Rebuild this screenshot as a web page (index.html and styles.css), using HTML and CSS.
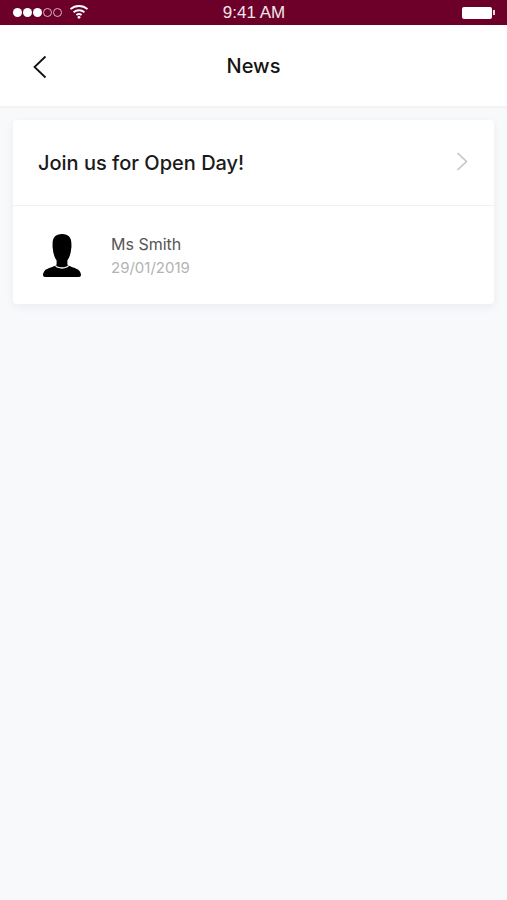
FILE: index.html
```html
<!DOCTYPE html>
<html lang="en">
<head>
  <meta charset="UTF-8" />
  <title>News</title>
  <link rel="stylesheet" href="styles.css">
</head>
<body>
  <div class="status-bar">
    <div class="status-left">
      <div class="signal">
        <span class="dot"></span>
        <span class="dot"></span>
        <span class="dot"></span>
        <span class="dot empty"></span>
        <span class="dot empty"></span>
      </div>
      <svg class="wifi" width="20" height="15" viewBox="0 0 20 15">
        <path d="M1.5 5.2C6.3 .9 13.7 .9 18.5 5.2" fill="none" stroke="#fff" stroke-width="1.8" />
        <path d="M4.6 8.2C7.6 5.6 12.4 5.6 15.4 8.2" fill="none" stroke="#fff" stroke-width="1.8" />
        <path d="M7.4 11C8.9 9.8 11.1 9.8 12.6 11" fill="none" stroke="#fff" stroke-width="1.8" />
        <circle cx="10" cy="13.3" r="1.4" fill="#fff" />
      </svg>
    </div>
    <div class="status-time">9:41 AM</div>
    <div class="battery">
      <span class="battery-body"></span>
      <span class="battery-tip"></span>
    </div>
  </div>

  <header class="nav-bar">
    <svg class="back" width="16" height="24" viewBox="0 0 16 24">
      <path d="M13.5 1.5L2.5 12L13.5 22.5" fill="none" stroke="#111" stroke-width="1.8" />
    </svg>
    <h1 class="nav-title">News</h1>
  </header>

  <main class="content">
    <section class="card">
      <div class="card-head">
        <h2 class="card-title">Join us for Open Day!</h2>
        <svg class="chevron" width="12" height="19" viewBox="0 0 12 19">
          <path d="M1.5 1L10.5 9.5L1.5 18" fill="none" stroke="#c4c4c4" stroke-width="1.6" />
        </svg>
      </div>
      <div class="card-author">
        <svg class="avatar" width="38" height="43" viewBox="0 0 38 43">
          <path d="M19 0C12.5 0 9.6 3.6 9.6 9.5C9.6 11.5 9.4 13 9.8 14.5C10 19 11.5 23.5 13.6 26.5L13.6 30C13.6 30.8 13 31.4 12.2 31.8C8.5 33.5 3.5 34.5 1.5 37C.6 38.2 0 40 0 41C0 42.2 .8 43 2 43H36C37.2 43 38 42.2 38 41C38 40 37.4 38.2 36.5 37C34.5 34.5 29.5 33.5 25.8 31.8C25 31.4 24.4 30.8 24.4 30L24.4 26.5C26.5 23.5 28 19 28.2 14.5C28.6 13 28.4 11.5 28.4 9.5C28.4 3.6 25.5 0 19 0Z" fill="#000" />
          <path d="M12.5 31.5C14.5 34.8 23.5 34.8 25.5 31.5" fill="none" stroke="#fff" stroke-width="1.3" />
        </svg>
        <div class="author-text">
          <div class="author-name">Ms Smith</div>
          <div class="author-date">29/01/2019</div>
        </div>
      </div>
    </section>
  </main>
</body>
</html>
```

FILE: styles.css
```css
* {
  box-sizing: border-box;
}

html, body {
  height: 100%;
}

body {
  margin: 0;
  background: #f8f9fb;
  font-family: 'Inter', sans-serif;
  color: #111;
  overflow: hidden;
}

/* Status bar */
.status-bar {
  height: 25px;
  background: #6c0029;
  color: #f3e4ea;
  display: grid;
  grid-template-columns: 1fr auto 1fr;
  align-items: center;
  padding: 0 12px 0 13px;
}

.status-left {
  display: flex;
  align-items: center;
  gap: 7px;
}

.signal {
  display: flex;
  gap: 1px;
}

.dot {
  width: 9px;
  height: 9px;
  border-radius: 50%;
  background: #fff;
}

.dot.empty {
  background: none;
  border: 1px solid #d9b8c5;
}

.wifi {
  margin-top: -3px;
}

.status-time {
  font-family: 'Liberation Sans', sans-serif;
  font-size: 17px;
}

.battery {
  display: flex;
  align-items: center;
  justify-content: flex-end;
  gap: 1px;
}

.battery-body {
  width: 30px;
  height: 12px;
  background: #fff;
  border-radius: 2px;
}

.battery-tip {
  width: 2px;
  height: 5px;
  background: #e9d5dd;
}

/* Nav */
.nav-bar {
  height: 83px;
  background: #fff;
  border-bottom: 2px solid #f1f2f4;
  display: flex;
  align-items: center;
  justify-content: center;
  position: relative;
}

.back {
  position: absolute;
  left: 32px;
  top: 30px;
}

.nav-title {
  margin: 0;
  font-size: 20px;
  font-weight: 500;
  color: #141414;
}

/* Card */
.content {
  padding: 12px 13px;
}

.card {
  background: #fff;
  border-radius: 4px;
  box-shadow: 0 3px 10px rgba(30, 40, 60, 0.06);
}

.card-head {
  height: 86px;
  display: flex;
  align-items: center;
  justify-content: space-between;
  padding: 0 26px 0 25px;
  border-bottom: 1px solid #f0f1f3;
}

.card-title {
  margin: 0;
  font-size: 20px;
  font-weight: 500;
  color: #1a1a1a;
}

.chevron {
  margin-top: -3px;
}

.card-author {
  height: 98px;
  display: flex;
  align-items: center;
  padding: 0 0 0 30px;
  gap: 30px;
}

.avatar {
  flex-shrink: 0;
}

.author-name {
  font-size: 16px;
  color: #555;
  margin-bottom: 4px;
}

.author-date {
  font-size: 15px;
  color: #b3b3b3;
}
```
